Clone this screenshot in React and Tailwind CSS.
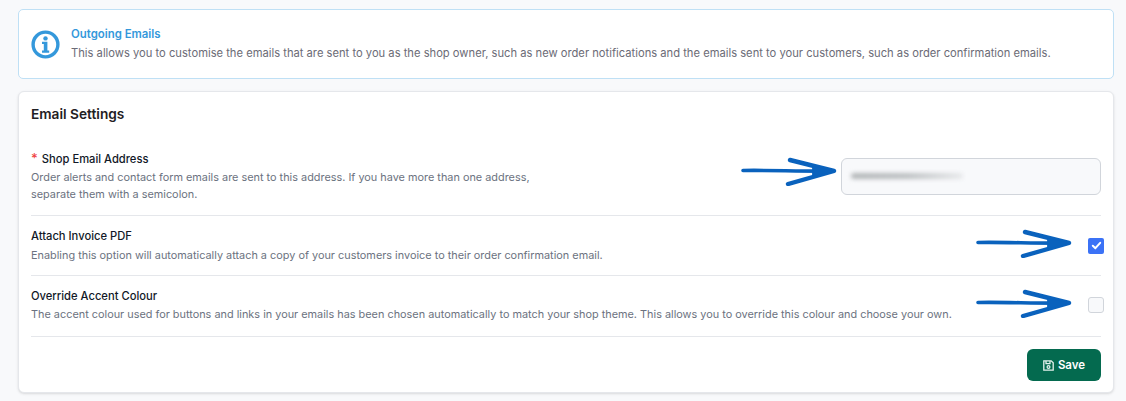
const Arrow = ({ className }) => (
  <svg className={className} width="100" height="30" viewBox="0 0 100 30" fill="none" stroke="#0a62bd" strokeLinecap="round" strokeLinejoin="round">
    <path d="M2 14.5 C 30 14, 60 15.5, 92 15" strokeWidth="3.6" />
    <path d="M49 4 L93 15 L47 28" strokeWidth="4.4" />
    <path d="M72 10.5 L93 15 L72 20.5z" fill="#0a62bd" strokeWidth="1" />
  </svg>
);

const Row = ({ title, required, children, right, className = "", descClass = "mt-[2px]" }) => (
  <div className={`flex items-center justify-between border-b border-[#e5e7eb] ${className}`}>
    <div>
      <div className="text-[11.2px] leading-[16px] font-medium text-[#111827]">
        {required && <span className="text-[#ef4444] mr-[4px] text-[13px] leading-none">*</span>}
        {title}
      </div>
      <div className={`${descClass} text-[10.88px] leading-[17px] text-[#6b7280]`}>{children}</div>
    </div>
    {right}
  </div>
);

export default function App() {
  return (
    <div className="relative w-[1126px] h-[401px] overflow-hidden bg-[#f8f9fb] pl-[18px] pr-[12px] pt-[9px] font-['Inter',sans-serif]">
      <div className="flex items-center h-[70px] rounded-[5px] border border-[#bfe0f5] bg-white pl-[12px]">
        <svg width="29" height="29" viewBox="0 0 29 29" className="shrink-0">
          <circle cx="14.5" cy="14.5" r="12.4" fill="none" stroke="#3498db" strokeWidth="3.4" />
          <circle cx="14.5" cy="8.4" r="2.2" fill="#3498db" />
          <path d="M11 11.8h5.4v8.6h1.8v2.3h-7.2v-2.3h1.8v-6.3h-1.8z" fill="#3498db" />
        </svg>
        <div className="ml-[11px]">
          <div className="text-[11.4px] leading-[16px] font-semibold text-[#3498db]">Outgoing Emails</div>
          <div className="mt-[3px] text-[11.2px] leading-[17px] text-[#6b6b76]">
            This allows you to customise the emails that are sent to you as the shop owner, such as new order notifications and the emails sent to your customers, such as order confirmation emails.
          </div>
        </div>
      </div>

      <div className="mt-[12px] h-[302px] rounded-[6px] border border-[#e5e7eb] bg-white px-[12px] shadow-sm">
        <h2 className="pt-[13px] text-[13.7px] leading-[18px] font-semibold text-[#1f2023]">Email Settings</h2>

        <Row
          required
          title="Shop Email Address"
          className="mt-[19px] h-[74px] pb-[4px]"
          right={
            <div className="relative h-[37px] w-[260px] shrink-0 overflow-hidden rounded-[6px] border border-[#d1d5db] bg-[#f8f9fb]">
              <div className="absolute left-[9px] top-[14px] h-[6px] w-[112px] rounded-full bg-gradient-to-r from-[#b3b6b8] via-[#bcbfc1] to-[#e8e9eb] blur-[2px]" />
            </div>
          }
        >
          Order alerts and contact form emails are sent to this address. If you have more than one address,
          <br />
          separate them with a semicolon.
        </Row>

        <Row
          title="Attach Invoice PDF"
          className="h-[60px]"
          descClass="mt-[3px]"
          right={
            <div className="mr-[-3px] flex h-[16px] w-[16px] shrink-0 items-center justify-center rounded-[2px] bg-[#3b72f6]">
              <svg width="11" height="11" viewBox="0 0 11 11" fill="none" stroke="#fff" strokeWidth="2" strokeLinecap="round" strokeLinejoin="round">
                <path d="M1.8 5.8 L4.4 8.2 L9.2 2.8" />
              </svg>
            </div>
          }
        >
          Enabling this option will automatically attach a copy of your customers invoice to their order confirmation email.
        </Row>

        <Row
          title="Override Accent Colour"
          className="h-[61px] pb-[2px]"
          right={<div className="mr-[-3px] h-[16px] w-[16px] shrink-0 rounded-[3px] border border-[#d1d5db] bg-[#f8f9fb]" />}
        >
          The accent colour used for buttons and links in your emails has been chosen automatically to match your shop theme. This allows you to override this colour and choose your own.
        </Row>

        <div className="flex justify-end pt-[12px]">
          <button className="flex h-[32px] w-[74px] items-center justify-center gap-[4px] rounded-[6px] bg-[#046a4f] pt-[1px] text-[11.5px] font-semibold text-white">
            <svg width="11" height="11" viewBox="0 0 11 11" fill="none" stroke="#e4f1ed" strokeWidth="1.3">
              <path d="M.8.8h7.4l2 2v7.4H.8z" />
              <path d="M3 1v2.6h4V1" />
              <circle cx="5.5" cy="7" r="1.4" />
            </svg>
            Save
          </button>
        </div>
      </div>

      <Arrow className="absolute left-[741px] top-[156px]" />
      <Arrow className="absolute left-[976px] top-[228px]" />
      <Arrow className="absolute left-[976px] top-[288px]" />
    </div>
  );
}
